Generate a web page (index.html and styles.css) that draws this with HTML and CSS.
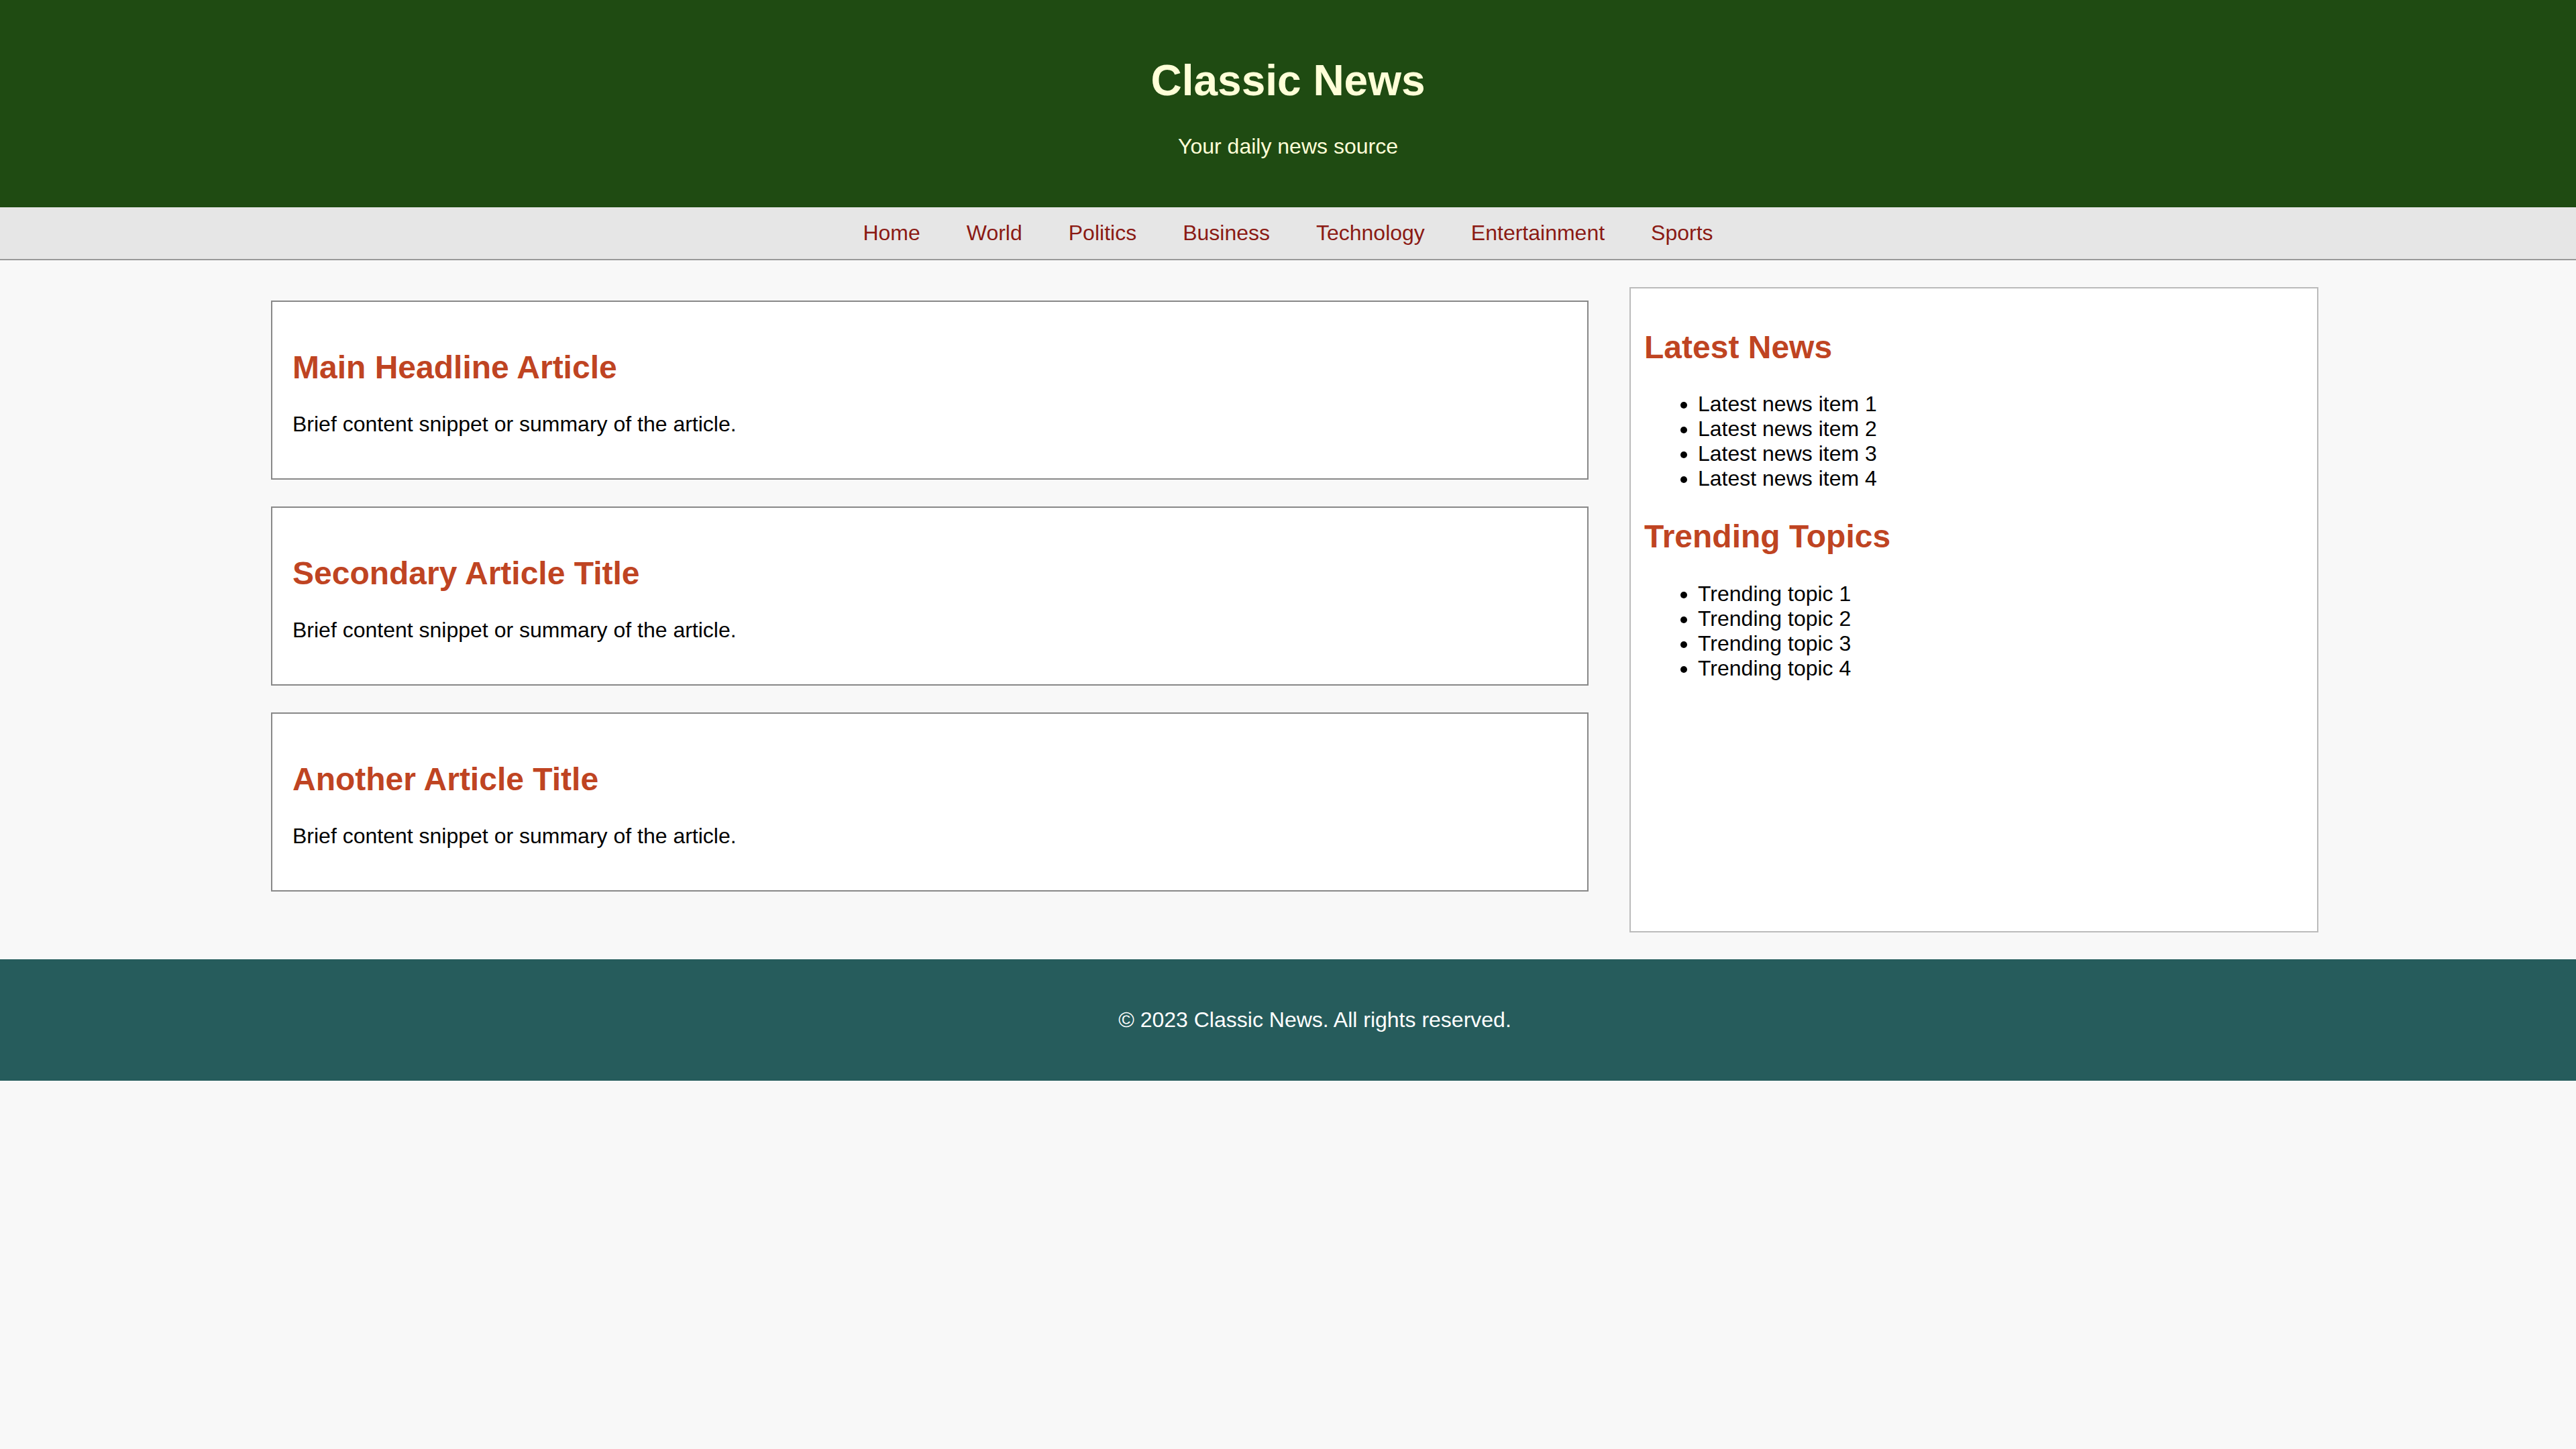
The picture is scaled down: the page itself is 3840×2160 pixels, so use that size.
FILE: index.html
```html
<!DOCTYPE html>
<html lang="en">
<head>
<meta charset="utf-8">
<title>Classic News</title>
<link rel="stylesheet" href="styles.css">
</head>
<body>
<header class="site-header">
  <h1 class="site-title">Classic News</h1>
  <p class="site-tagline">Your daily news source</p>
</header>
<nav class="site-nav">
  <a href="#">Home</a>
  <a href="#">World</a>
  <a href="#">Politics</a>
  <a href="#">Business</a>
  <a href="#">Technology</a>
  <a href="#">Entertainment</a>
  <a href="#">Sports</a>
</nav>
<div class="layout">
  <main class="articles">
    <article class="article">
      <h2 class="article-title">Main Headline Article</h2>
      <p class="article-text">Brief content snippet or summary of the article.</p>
    </article>
    <article class="article">
      <h2 class="article-title">Secondary Article Title</h2>
      <p class="article-text">Brief content snippet or summary of the article.</p>
    </article>
    <article class="article">
      <h2 class="article-title">Another Article Title</h2>
      <p class="article-text">Brief content snippet or summary of the article.</p>
    </article>
  </main>
  <aside class="sidebar">
    <h2 class="sidebar-title">Latest News</h2>
    <ul class="sidebar-list">
      <li>Latest news item 1</li>
      <li>Latest news item 2</li>
      <li>Latest news item 3</li>
      <li>Latest news item 4</li>
    </ul>
    <h2 class="sidebar-title">Trending Topics</h2>
    <ul class="sidebar-list">
      <li>Trending topic 1</li>
      <li>Trending topic 2</li>
      <li>Trending topic 3</li>
      <li>Trending topic 4</li>
    </ul>
  </aside>
</div>
<footer class="site-footer">
  <p class="footer-text">&copy; 2023 Classic News. All rights reserved.</p>
</footer>
</body>
</html>
```

FILE: styles.css
```css
html, body {
  margin: 0;
  padding: 0;
}

body {
  background: #f8f8f8;
  color: #000;
  font-family: "Liberation Sans", Arial, Helvetica, sans-serif;
  font-size: 32px;
  line-height: normal;
}

.site-header {
  background: #1f4b12;
  color: #ffffd8;
  text-align: center;
  padding: 40px;
}

.site-title {
  font-size: 64px;
  font-weight: bold;
  margin: 42.88px 0;
}

.site-tagline {
  margin: 32px 0;
}

.site-nav {
  background: #e6e6e6;
  border-bottom: 2px solid #999;
  padding: 20px 0;
  display: flex;
  justify-content: center;
  gap: 69px;
}

.site-nav a {
  color: #8b1a14;
  text-decoration: none;
}

.layout {
  width: 80%;
  margin: 0 auto;
  padding: 40px 0;
  display: grid;
  grid-template-columns: 1fr 1027px;
  column-gap: 41px;
  align-items: start;
}

.articles {
  display: flex;
  flex-direction: column;
  gap: 40px;
  padding: 20px;
}

.article {
  background: #fff;
  border: 2px solid #888;
  padding: 0 30px;
}

.article-title,
.sidebar-title {
  color: #bf4422;
  font-size: 48px;
  font-weight: bold;
  margin: 39.84px 0;
}

.article-title {
  margin-top: 70px;
  margin-bottom: 39px;
}

.article-text {
  margin: 0 0 62px;
}

.sidebar {
  background: #fff;
  border: 2px solid #bbb;
  padding: 20px;
  box-sizing: border-box;
  height: 962px;
}

.sidebar-list {
  margin: 32px 0;
  padding-left: 80px;
}

.site-footer {
  background: #265c5c;
  color: #fff;
  text-align: center;
  padding: 40px 0 40px 80px;
}

.footer-text {
  margin: 32px 0;
}
```
